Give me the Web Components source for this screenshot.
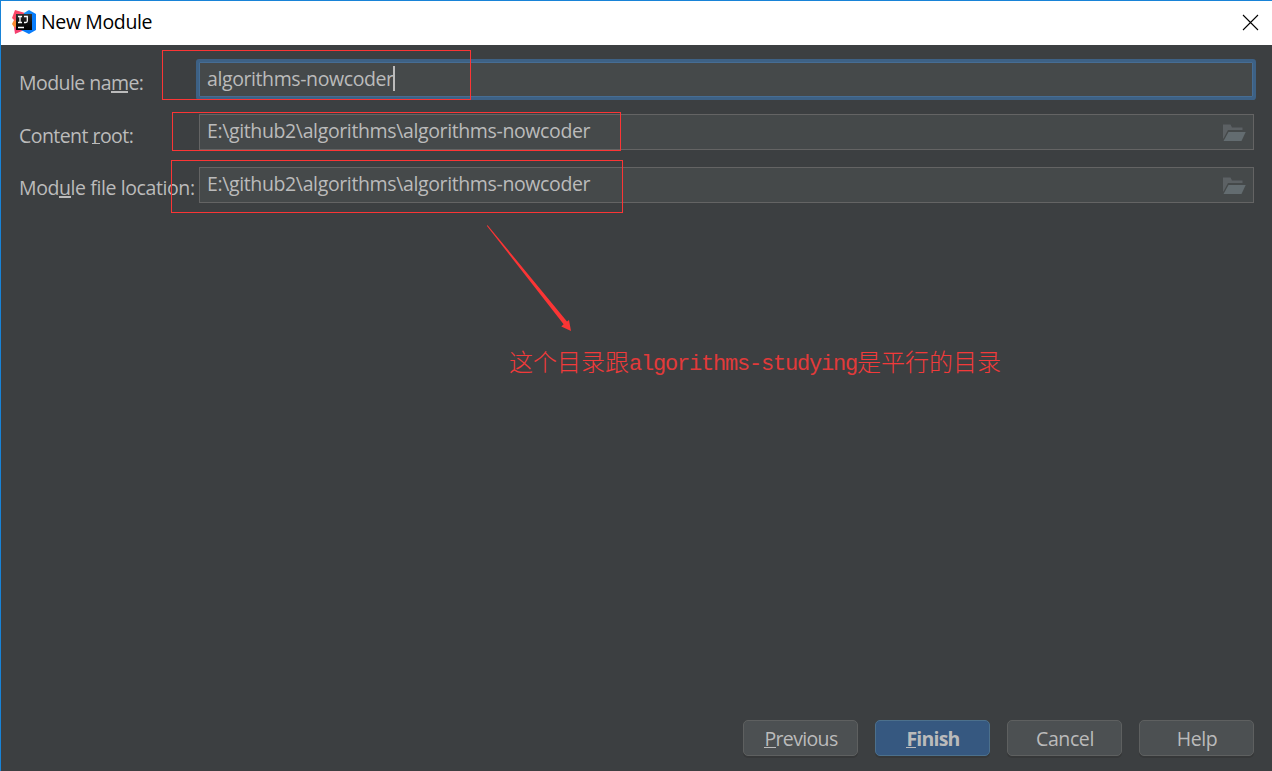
<!DOCTYPE html>
<html lang="zh">
<head>
<meta charset="utf-8">
<title>New Module</title>
<style>
html,body{margin:0;height:100%;overflow:hidden;background:#3c3f41}
body{font-family:"Open Sans","Noto Sans",sans-serif}
</style>
</head>
<body>
<module-dialog></module-dialog>
<script>
const define = (name, html) => customElements.define(name, class extends HTMLElement {
  constructor() {
    super();
    const t = document.createElement('template');
    t.innerHTML = html;
    this.attachShadow({mode: 'open'}).append(t.content.cloneNode(true));
  }
});

define('app-logo', `<style>:host{display:block;width:24px;height:24px}svg{display:block}</style>
<svg width="24" height="24" viewBox="0 0 24 24">
<defs><linearGradient id="a" x2="0" y2="1"><stop stop-color="#fd4468"/><stop offset=".38" stop-color="#fb4a62"/><stop offset=".5" stop-color="#fc8c2c"/><stop offset=".68" stop-color="#fb8a35"/><stop offset=".76" stop-color="#f54070"/></linearGradient>
<linearGradient id="b" x2="1" y2="1"><stop stop-color="#24a2ee"/><stop offset=".5" stop-color="#087cfa"/></linearGradient>
<linearGradient id="c" x2="0" y2="1"><stop stop-color="#343434"/><stop offset=".5" stop-color="#111"/><stop offset="1" stop-color="#000"/></linearGradient></defs>
<path d="M3 0L13 3V20L10 21L3 24L2 17L0 14L2 10L0 8Z" fill="url(#a)"/>
<path d="M12 3L17 0L24 4V20L17 24L9 20Z" fill="url(#b)"/>
<path d="M4 4H20V20H4Z" fill="url(#c)"/>
<path d="M6 6.5H10M8 6.5V12.5M6 12.5H10M12 6.5H15.3V11Q15.3 12.5 13.7 12.5H12M6 17.5H12" fill="none" stroke="#fff" stroke-width="1.3"/>
</svg>`);

define('title-bar', `<style>
:host{display:flex;align-items:center;height:44px;box-sizing:border-box;background:#fff;color:#000;padding:0 13px 0 11px}
span{font-size:19.5px;line-height:42px;padding-bottom:2px;margin-left:5px;letter-spacing:-.37px;flex:1}
app-logo,svg{display:block;margin-bottom:2px}
</style><app-logo></app-logo><span><slot></slot></span>
<svg width="17" height="17" viewBox="0 0 17 17"><path d="M1 1L16 16M16 1L1 16" stroke="#000" stroke-width="1.1"/></svg>`);

define('field-label', `<style>:host{display:block;white-space:nowrap;font-size:19.5px;line-height:26px;letter-spacing:var(--ls,-.4px);color:#bbb}
::slotted(u){text-decoration:none;box-shadow:0 var(--bar,2px) #bbb;display:inline-block;line-height:var(--drop,16px)}</style><slot></slot>`);

define('folder-icon', `<style>:host{display:block;width:23px;height:18px}svg{display:block}</style>
<svg width="23" height="18" viewBox="0 0 23 18"><path d="M0 .5H7.5L9 3.5H19.5V6H5L.5 14.5H0Z" fill="#5c6164"/><path d="M5.5 8H22.7L18.5 17H.5Z" fill="#636c70"/></svg>`);

define('text-field', `<style>
:host{display:flex;align-items:center;box-sizing:border-box;height:36px;border:1px solid #646464;background:#45494a;color:#bbb;padding:0 7px;font-size:19.5px;letter-spacing:var(--ls,-.37px);line-height:30px}
:host([focused]){height:35px;width:1054px;border-color:#466d94;box-shadow:0 0 0 3px #3d6185;border-radius:1px}
.t{white-space:pre;margin-top:-2px}i{width:2px;height:25px;background:#bbb;margin:-2px 0 0 -1px}.s{flex:1}
:host([focused]) .t{margin-top:-1px}
:host([focused]) folder-icon,:host(:not([focused])) i{display:none}
folder-icon{margin-top:2px}
</style><span class="t"><slot></slot></span><i></i><span class="s"></span><folder-icon></folder-icon>`);

define('push-button', `<style>
:host{display:flex;align-items:center;justify-content:center;box-sizing:border-box;width:115px;height:36px;border:1.5px solid #5e6060;border-radius:5px;background:#4c5052;color:#bbb;font-size:19.5px;line-height:30px;letter-spacing:var(--ls,-.4px);box-shadow:0 2px 0 #363839}
:host([primary]){background:#365880;border-color:#4c708c;font-weight:700}
::slotted(u){text-decoration:none;box-shadow:0 1px #bbb;display:inline-block;line-height:16px}
span{margin:1px 0 0 1px}
</style><span><slot></slot></span>`);

define('mark-layer', `<style>
:host{position:absolute;inset:0;pointer-events:none}
svg{position:absolute;inset:0}
p{position:absolute;left:509px;top:343px;margin:0;white-space:nowrap;color:#f23a3a;font:300 24px/36px "Noto Sans CJK SC",sans-serif}
code{font:22px/34px "Liberation Mono",monospace;letter-spacing:-1.2px;position:relative;top:-1px;color:#e23a3a}
</style>
<svg width="1272" height="771" viewBox="0 0 1272 771">
<g fill="none" stroke="#fb3535"><rect x="162.5" y="50.5" width="308" height="49"/><rect x="172.5" y="112.5" width="448" height="38"/><rect x="171.5" y="160.5" width="451" height="52"/></g>
<path d="M486.8 225.8L487.6 225.2L567 321.5L569 320L571 331L561.3 326.5L563.6 324.3Z" fill="#fb3535"/></svg>
<p>这个目录跟<code>algorithms-studying</code>是平行的目录</p>`);

define('module-dialog', `<style>
:host{display:flex;flex-direction:column;position:relative;width:1272px;height:771px;box-sizing:border-box;border:solid #1883d7;border-width:1px 0 0 1px;background:#3c3f41}
form{display:grid;grid-template-columns:180px 1055px;grid-template-rows:35px 36px 36px;row-gap:17px;padding:17px 0 0 18px;margin:0}
field-label{margin-top:8px}
.root{margin-top:9px;--ls:-.55px;--bar:1px;--drop:14px}
main{flex:1}
footer{display:flex;justify-content:flex-end;gap:17px;padding:0 18px 15px 0}
mark-layer{top:-1px;left:-1px}
</style>
<title-bar>New Module</title-bar>
<main><form>
<field-label style="--ls:-.55px">Module na<u>m</u>e:</field-label><text-field focused style="--ls:-.4px">algorithms-nowcoder</text-field>
<field-label class="root">Content <u>r</u>oot:</field-label><text-field>E:\\github2\\algorithms\\algorithms-nowcoder</text-field>
<field-label>Mod<u>u</u>le file location:</field-label><text-field>E:\\github2\\algorithms\\algorithms-nowcoder</text-field>
</form></main>
<footer><push-button style="--ls:-.65px"><u>P</u>revious</push-button><push-button primary style="--ls:-.8px"><u>F</u>inish</push-button><push-button>Cancel</push-button><push-button>Help</push-button></footer>
<mark-layer></mark-layer>`);
</script>
</body>
</html>
